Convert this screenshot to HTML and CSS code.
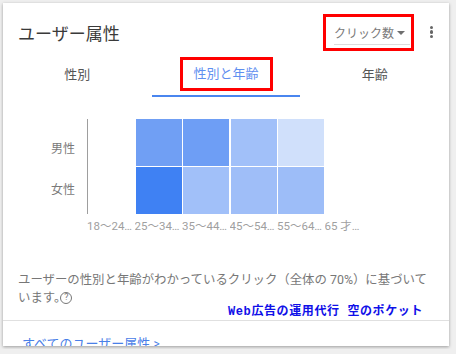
FILE: index.html
```html
<!DOCTYPE html>
<html lang="ja">
<head>
  <meta charset="UTF-8">
  <title>ユーザー属性</title>
  <link rel="stylesheet" href="styles.css">
</head>
<body>
  <section class="card">
    <!-- ヘッダー -->
    <div class="card-header">
      <h2 class="title">ユーザー属性</h2>
      <div class="mark metric-box">
        <div class="metric">
          <span>クリック数</span>
          <span class="caret"></span>
        </div>
      </div>
      <div class="kebab"><i></i><i></i><i></i></div>
    </div>

    <!-- タブ -->
    <div class="tabs">
      <div class="tab">性別</div>
      <div class="tab active"><span class="mark tab-mark">性別と年齢</span></div>
      <div class="tab">年齢</div>
    </div>

    <!-- ヒートマップ -->
    <div class="chart">
      <div class="y-labels">
        <span class="y-male">男性</span>
        <span class="y-female">女性</span>
      </div>
      <div class="plot">
        <div class="grid">
          <div class="cell"></div>
          <div class="cell c1"></div>
          <div class="cell c2"></div>
          <div class="cell c3"></div>
          <div class="cell c4"></div>
          <div class="cell"></div>
          <div class="cell"></div>
          <div class="cell c5"></div>
          <div class="cell c6"></div>
          <div class="cell c7"></div>
          <div class="cell c8"></div>
          <div class="cell"></div>
        </div>
        <div class="x-labels">
          <span>18〜24歳</span>
          <span>25〜34歳</span>
          <span>35〜44歳</span>
          <span>45〜54歳</span>
          <span>55〜64歳</span>
          <span class="last">65 才以上</span>
        </div>
      </div>
    </div>

    <p class="note">ユーザーの性別と年齢がわかっているクリック（全体の 70%）に基づいています。<span class="help">?</span></p>
    <div class="watermark">Web広告の運用代行 空のポケット</div>

    <div class="card-footer">
      <a class="more" href="#">すべてのユーザー属性 <span class="chev">&gt;</span></a>
    </div>
  </section>
</body>
</html>
```

FILE: styles.css
```css
* {
  padding: 0;
  margin: 0;
  box-sizing: border-box;
}

body {
  background: #efefef;
  padding: 3px;
  font-family: Roboto, "Noto Sans CJK JP", sans-serif;
}

.card {
  width: 446px;
  height: 343px;
  background: #ffffff;
  box-shadow: 0 1px 3px rgba(0,0,0,.35);
  overflow: hidden;
}

.card-header {
  height: 54px;
  padding: 4px 0 0 15px;
  display: flex;
  align-items: center;
}

.title {
  flex: 1;
  font-size: 17px;
  font-weight: normal;
  color: #3a3a3a;
}

/* 赤い枠の注記 */
.mark {
  border: 3px solid #ff0000;
}

.metric-box {
  width: 91px;
  height: 37px;
  padding: 0 0 0 8px;
  display: flex;
  align-items: center;
}

.metric {
  width: 76px;
  height: 24px;
  margin-top: 2px;
  display: flex;
  align-items: center;
  justify-content: space-between;
  padding-right: 5px;
  border-bottom: 1px solid #dcdcdc;
  font-size: 12px;
  color: #7a7a7a;
}

.caret {
  width: 0;
  height: 0;
  border-left: 4px solid transparent;
  border-right: 4px solid transparent;
  border-top: 4px solid #6f6f6f;
}

.kebab {
  width: 35px;
  display: flex;
  flex-direction: column;
  align-items: center;
  gap: 1.6px;
}

.kebab i {
  width: 3.2px;
  height: 3.2px;
  border-radius: 50%;
  background: #666;
}

.tabs {
  display: flex;
}

.tab {
  flex: 1;
  height: 40px;
  display: flex;
  justify-content: center;
  align-items: flex-start;
  padding-top: 7px;
  font-size: 13px;
  color: #555;
}

.tab.active {
  padding-top: 0;
  border-bottom: 2.5px solid #4a86ef;
  color: #5f8ff0;
}

.tab-mark {
  height: 34px;
  padding: 0 11px;
  line-height: 28px;
}

.chart {
  display: flex;
  padding-top: 22px;
  height: 140px;
}

.y-labels {
  width: 72px;
  display: flex;
  flex-direction: column;
  align-items: flex-end;
  padding-top: 20px;
  gap: 24px;
  font-size: 12px;
  color: #7a7a7a;
}

.plot {
  margin-left: 12px;
}

.grid {
  display: grid;
  grid-template-columns: repeat(6, 46px);
  grid-template-rows: 46.5px 46.5px;
  gap: 1.5px;
  border-left: 1px solid #9e9e9e;
  width: 285px;
}

.c1 { background: #709ff4; }
.c2 { background: #6e9ef5; }
.c3 { background: #a1c0f9; }
.c4 { background: #d0e0fb; }
.c5 { background: #3f81f3; }
.c6 { background: #a1c0f9; }
.c7 { background: #9fbef8; }
.c8 { background: #9dbdf8; }

.x-labels {
  display: flex;
  margin-top: 3px;
  font-size: 11.5px;
  color: #a0a0a0;
}

.x-labels span {
  width: 47.5px;
  white-space: nowrap;
  overflow: hidden;
  text-overflow: ellipsis;
}

.x-labels .last {
  width: 38px;
}

.note {
  padding: 34px 20px 0 15px;
  font-size: 12.4px;
  line-height: 18px;
  color: #777;
}

.help {
  display: inline-block;
  width: 12px;
  height: 12px;
  margin-left: -6px;
  border: 1.2px solid #777;
  border-radius: 50%;
  font-size: 9px;
  line-height: 9.5px;
  text-align: center;
  vertical-align: 2px;
}

.watermark {
  text-align: right;
  padding-right: 26px;
  margin-top: -3px;
  font-family: "Liberation Mono", "Noto Sans CJK JP", monospace;
  font-size: 12px;
  font-weight: bold;
  letter-spacing: 0.6px;
  color: #1010e8;
  line-height: 16px;
}

.card-footer {
  border-top: 1px solid #e0e0e0;
  padding: 12px 0 0 19px;
}

.more {
  font-size: 13px;
  color: #4a80e8;
  text-decoration: none;
}

.chev {
  font-size: 12px;
}
```
